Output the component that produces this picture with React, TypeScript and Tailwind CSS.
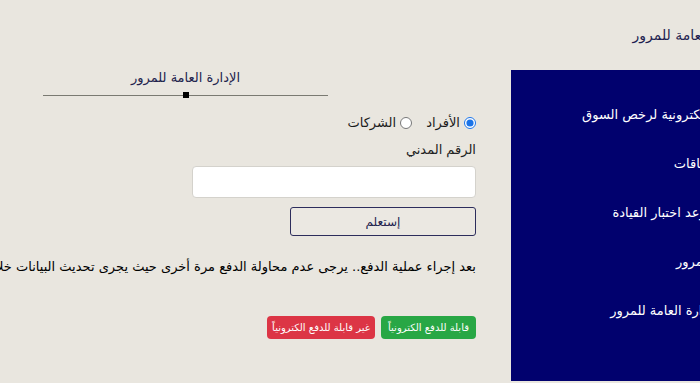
export default function App() {
  const menu = [
    "خدمة الكترونية لرخص السوق",
    "الاستحقاقات",
    "حجز موعد اختبار القيادة",
    "إدارة المرور",
    "عن الإدارة العامة للمرور",
  ];

  return (
    <div
      className="h-[383px] w-[700px] overflow-hidden bg-[#e9e6df] text-[#1b1b1b]"
      style={{ fontFamily: '"DejaVu Sans", "Noto Sans", sans-serif' }}
    >
      <div className="flex w-[790px]">
        {/* main column */}
        <div className="w-[511px] shrink-0">
          <div className="pl-[43px] pt-[68px]">
            <div className="w-[285px]">
              <h2
                dir="rtl"
                className="text-center text-[13px] leading-5 text-[#23234d]"
              >
                الإدارة العامة للمرور
              </h2>
              <div className="relative mt-[7px] h-px bg-[#7a7a72]">
                <span className="absolute left-[140px] top-[-3px] h-[6px] w-[6px] bg-black" />
              </div>
            </div>
          </div>

          <div dir="rtl" className="pr-[35px]">
            <div className="mt-[17px] flex h-5 items-center gap-[14px] text-[13px]">
              <label className="flex items-center gap-1">
                <input
                  type="radio"
                  name="type"
                  defaultChecked
                  className="m-0 h-[12px] w-[12px] accent-[#1a73e8]"
                />
                <span>الأفراد</span>
              </label>
              <label className="flex items-center gap-1">
                <input
                  type="radio"
                  name="type"
                  className="m-0 h-[12px] w-[12px]"
                />
                <span>الشركات</span>
              </label>
            </div>

            <div className="mt-[7px] h-5 text-[13px] leading-5 text-[#222]">
              الرقم المدني
            </div>

            <input
              type="text"
              className="mt-[6px] block h-[32px] w-[284px] rounded-[4px] border border-[#d4d2cc] bg-white"
            />

            <button className="mt-[9px] block h-[29px] w-[186px] rounded-[3px] border border-[#2d2d5c] bg-[#ebe8e2] text-[12px] text-[#22224d]">
              إستعلم
            </button>

            <p className="mt-[21px] h-5 whitespace-nowrap text-[13px] leading-5 text-black">
              بعد إجراء عملية الدفع.. يرجى عدم محاولة الدفع مرة أخرى حيث يجرى
              تحديث البيانات خلال عشر دقائق
            </p>

            <div className="mt-[39px] flex gap-[6px]">
              <span className="flex h-[23px] w-[95px] items-center justify-center rounded-[4px] bg-[#28a745] text-[10px] text-white">
                قابلة للدفع الكترونياً
              </span>
              <span className="flex h-[23px] w-[108px] items-center justify-center rounded-[4px] bg-[#dc3545] text-[10px] text-white">
                غير قابلة للدفع الكترونياً
              </span>
            </div>
          </div>
        </div>

        {/* right column */}
        <div className="w-[279px] shrink-0">
          <div
            dir="rtl"
            className="flex h-[70px] items-center pr-[40px] text-[14px] text-[#1e1e50]"
          >
            الإدارة العامة للمرور
          </div>
          <nav
            dir="rtl"
            className="h-[311px] bg-[#01016e] pr-[49px] pt-[35px] text-[13px] text-white"
          >
            {menu.map((item) => (
              <div key={item} className="h-[49px] leading-5">
                {item}
              </div>
            ))}
          </nav>
        </div>
      </div>
    </div>
  );
}
